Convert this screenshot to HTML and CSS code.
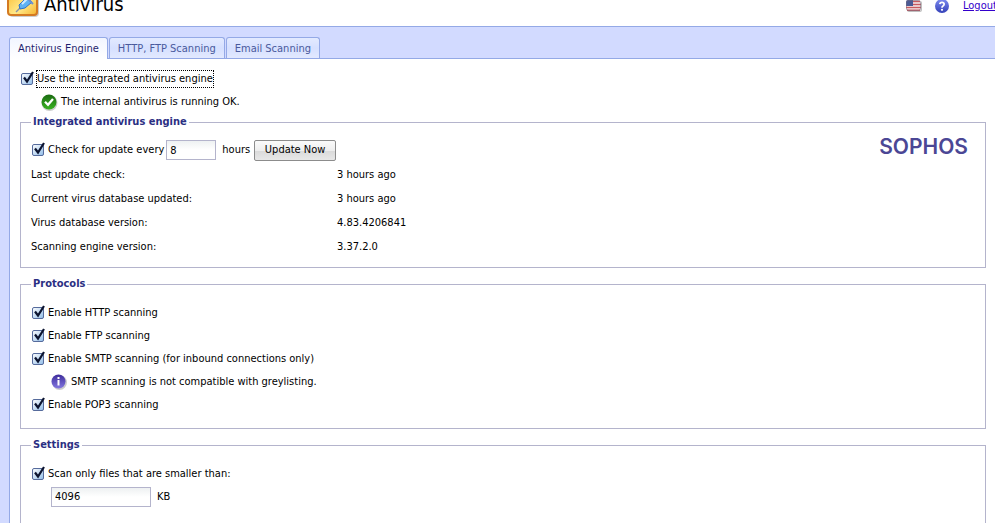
FILE: index.html
```html
<!DOCTYPE html>
<html lang="en">
<head>
<meta charset="utf-8">
<title>Antivirus</title>
<link rel="stylesheet" href="styles.css">
</head>
<body>
<header class="header">
  <svg class="logo" width="32" height="34" viewBox="0 0 32 34" aria-hidden="true">
    <defs>
      <linearGradient id="gold" x1="0" y1="0" x2="1" y2="1">
        <stop offset="0" stop-color="#f9b21e"/><stop offset=".6" stop-color="#ffe98a"/><stop offset="1" stop-color="#f6b42c"/>
      </linearGradient>
    </defs>
    <rect x="2" y="3" width="30" height="30" rx="4" fill="#000" opacity=".2"/>
    <rect x="1" y="1" width="29" height="30" rx="3" fill="url(#gold)" stroke="#d47a22" stroke-width="2"/>
    <path d="M9 28l5-5" stroke="#8a93a5" stroke-width="1.5"/>
    <path d="M12 21l8-8 5 5-7 6-5 1z" fill="#5fb2f4" stroke="#2f70c8"/>
    <path d="M15 20l6-6" stroke="#d4ecff" stroke-width="2"/>
    <path d="M18 12l8 8M23 15l6-6" stroke="#6a90d4" stroke-width="2"/>
  </svg>
  <h1 class="title">Antivirus</h1>
  <nav class="tools">
    <svg class="flag" width="16" height="12" viewBox="0 0 16 12" role="img" aria-label="English">
      <rect x="1" y="1" width="15" height="11" rx="2" fill="#000" opacity=".25"/>
      <rect width="15" height="11" rx="2" fill="#f4ecec"/>
      <path d="M1 1.5h13M0 4.5h15M0 7.5h15M1 10.2h13" stroke="#c85a60" stroke-width="1.4"/>
      <path d="M0 2q0-2 2-2h5v6H0z" fill="#4a5a94"/>
      <rect x=".5" y=".5" width="14" height="10" rx="2" fill="none" stroke="#776d80" opacity=".5"/>
    </svg>
    <svg class="help" width="14" height="14" viewBox="0 0 14 14" role="img" aria-label="Help">
      <defs><linearGradient id="blue" x1="0" y1="0" x2="0" y2="1"><stop offset="0" stop-color="#7d8cf0"/><stop offset="1" stop-color="#3440b8"/></linearGradient></defs>
      <circle cx="7" cy="7" r="7" fill="url(#blue)"/>
      <path d="M4.8 5.2Q5 3.3 7 3.3t2.2 1.8Q9.200 6.200 8 7q-1 .6-1 1.700" fill="none" stroke="#fff" stroke-width="1.700"/>
      <circle cx="7" cy="10.800" r="1.100" fill="#fff"/>
    </svg>
    <a class="logout" href="#">Logout</a>
  </nav>
</header>
<main class="body">
  <div class="tabs" role="tablist">
    <button class="tab tab-active" role="tab" aria-selected="true" type="button">Antivirus Engine</button>
    <button class="tab" role="tab" aria-selected="false" type="button">HTTP, FTP Scanning</button>
    <button class="tab" role="tab" aria-selected="false" type="button">Email Scanning</button>
  </div>
  <form class="panel">
    <div class="row master">
      <input class="check" type="checkbox" id="use" checked><label class="focused" for="use">Use the integrated antivirus engine</label>
    </div>
    <p class="row status">
      <svg width="17" height="17" viewBox="0 0 17 17" aria-hidden="true">
        <defs><linearGradient id="green" x1="0" y1="0" x2="0" y2="1"><stop offset="0" stop-color="#1b6b12"/><stop offset="1" stop-color="#39b322"/></linearGradient></defs>
        <circle cx="8.500" cy="9" r="8" fill="#000" opacity=".2"/>
        <circle cx="8" cy="8" r="7.500" fill="url(#green)"/>
        <path d="M4 7.800l3 3 5-5.800" fill="none" stroke="#fff" stroke-width="2.300"/>
      </svg>
      <span>The internal antivirus is running OK.</span>
    </p>

    <fieldset class="group">
      <legend>Integrated antivirus engine</legend>
      <div class="engine">
        <div class="engine-main">
          <div class="row update">
            <input class="check" type="checkbox" id="upd" checked><label for="upd">Check for update every</label>
            <input class="field field-short" type="text" value="8" aria-label="Update interval">
            <span class="unit">hours</span>
            <button class="button" type="button">Update Now</button>
          </div>
          <table class="facts">
            <tr><th scope="row">Last update check:</th><td>3 hours ago</td></tr>
            <tr><th scope="row">Current virus database updated:</th><td>3 hours ago</td></tr>
            <tr><th scope="row">Virus database version:</th><td>4.83.4206841</td></tr>
            <tr><th scope="row">Scanning engine version:</th><td>3.37.2.0</td></tr>
          </table>
        </div>
        <span class="sophos">SOPHOS</span>
      </div>
    </fieldset>

    <fieldset class="group protocols">
      <legend>Protocols</legend>
      <div class="row"><input class="check" type="checkbox" id="http" checked><label for="http">Enable HTTP scanning</label></div>
      <div class="row"><input class="check" type="checkbox" id="ftp" checked><label for="ftp">Enable FTP scanning</label></div>
      <div class="row"><input class="check" type="checkbox" id="smtp" checked><label for="smtp">Enable SMTP scanning (for inbound connections only)</label></div>
      <p class="row note">
        <svg width="16" height="16" viewBox="0 0 16 16" aria-hidden="true">
          <defs><linearGradient id="violet" x1="0" y1="0" x2="0" y2="1"><stop offset="0" stop-color="#3d2c9c"/><stop offset="1" stop-color="#8478e0"/></linearGradient></defs>
          <circle cx="8.500" cy="8.500" r="7.500" fill="#000" opacity=".2"/>
          <circle cx="7.500" cy="7.500" r="7" fill="url(#violet)"/>
          <path d="M7.500 3v2M7.500 6v5.500" stroke="#fff" stroke-width="2"/>
        </svg>
        <span>SMTP scanning is not compatible with greylisting.</span>
      </p>
      <div class="row"><input class="check" type="checkbox" id="pop" checked><label for="pop">Enable POP3 scanning</label></div>
    </fieldset>

    <fieldset class="group settings">
      <legend>Settings</legend>
      <div class="row"><input class="check" type="checkbox" id="size" checked><label for="size">Scan only files that are smaller than:</label></div>
      <div class="row size"><input class="field" type="text" value="4096" aria-label="Maximum file size"><span class="unit">KB</span></div>
    </fieldset>
  </form>
</main>
</body>
</html>
```

FILE: styles.css
```css
* { box-sizing: border-box; }

body {
  margin: 0;
  height: 100vh;
  overflow: hidden;
  display: flex;
  flex-direction: column;
  font: 11px/16px "DejaVu Sans Condensed", Tahoma, "DejaVu Sans", sans-serif;
  color: #000;
  background: #fff;
}

p { margin: 0; }
button, input { font: inherit; color: inherit; margin: 0; }

.header {
  flex: none;
  height: 27px;
  display: flex;
  align-items: flex-end;
  padding: 0 0 8px 7px;
  border-bottom: 1px solid #94a9e6;
  overflow: hidden;
}

.logo { flex: none; }
.title { margin: 0 0 0 5px; font-size: 20px; line-height: 27px; font-weight: normal; }
.tools { margin-left: auto; display: flex; align-items: center; height: 24px; }
.help { margin-left: 13px; }
.logout { margin-left: 14px; width: 32px; white-space: nowrap; color: #30c; }

.body {
  flex: 1;
  display: flex;
  flex-direction: column;
  min-height: 0;
  padding: 10px 0 0 9px;
  background: #d2daff;
}

.tabs { display: flex; gap: 1px; height: 22px; z-index: 1; }
.tab {
  height: 21px;
  padding: 1px 8px 0;
  border: 1px solid #94a9e6;
  border-bottom: 0;
  border-radius: 3px 3px 0 0;
  background: linear-gradient(#e3eaff, #d6e0ff 50%, #e2e9ff);
  color: #4a5a9c;
  white-space: nowrap;
}
.tab-active { height: 22px; background: linear-gradient(#f2f5ff, #fff); color: #1e1e6e; }

.panel {
  flex: 1;
  min-height: 0;
  margin-top: -1px;
  padding: 12px 9px 0 10px;
  border: 1px solid #94a9e6;
  border-width: 1px 0 0 1px;
  background: #fff;
  overflow: hidden;
}

.row { display: flex; align-items: center; white-space: nowrap; height: 23px; }
.master { height: 16px; padding-left: 1px; }
.focused { outline: 1px dotted #000; }
.status { padding: 3px 0 0 21px; gap: 3px; height: 27px; }

.check {
  appearance: none;
  flex: none;
  width: 14px;
  height: 16px;
  margin-right: 2px;
  background: url("data:image/svg+xml,%3Csvg xmlns='http://www.w3.org/2000/svg' width='14' height='16'%3E%3Cdefs%3E%3ClinearGradient id='g' x2='1' y2='1'%3E%3Cstop stop-color='%23fff'/%3E%3Cstop offset='1' stop-color='%2390bce8'/%3E%3C/linearGradient%3E%3C/defs%3E%3Crect x='.5' y='2.5' width='11' height='11' rx='1.5' fill='url(%23g)' stroke='%23566b9c'/%3E%3Cpath d='M3 6.500l3 4L12 1' fill='none' stroke='%230c1430' stroke-width='2.200'/%3E%3C/svg%3E") no-repeat;
}

.group { margin: 0; padding: 0 10px; border: 1px solid #b4b4cc; height: 154px; }
.group + .group { margin-top: 8px; }
.group legend { padding: 0 2px; font-weight: bold; color: #2b2f83; }

.engine { display: flex; justify-content: space-between; align-items: flex-start; }
.engine-main { flex: 1; }
.update { height: 32px; padding-left: 1px; margin-top: 4px; }
.field {
  width: 100px;
  height: 20px;
  padding: 0 3px;
  border: 1px solid #b4b4cc;
  background: linear-gradient(#eef1f2, #fff 50%);
}
.field-short { width: 50px; margin-left: 2px; }
.unit { margin-left: 6px; }
.button {
  width: 82px;
  height: 21px;
  margin-left: 4px;
  padding: 0;
  border: 1px solid #8c8c8c;
  border-radius: 2px;
  background: linear-gradient(#fafafa, #eee 50%, #dadada 52%, #e8e8e8);
}
.facts { width: 100%; border-collapse: collapse; table-layout: fixed; margin-top: -3px; }
.facts th, .facts td { height: 24px; padding: 0; text-align: left; font-weight: normal; }
.facts th { width: 306px; }
.sophos {
  margin: 7px 7px 0 0;
  font: 600 21px/20px Inter, sans-serif;
  color: #4b4795;
}

.protocols { height: 153px; }
.protocols .row, .settings .row { padding-left: 1px; }
.protocols legend + .row, .settings legend + .row { margin-top: 9px; }
.protocols .note { padding-left: 20px; gap: 4px; }
.settings .size { padding-left: 20px; }
```
